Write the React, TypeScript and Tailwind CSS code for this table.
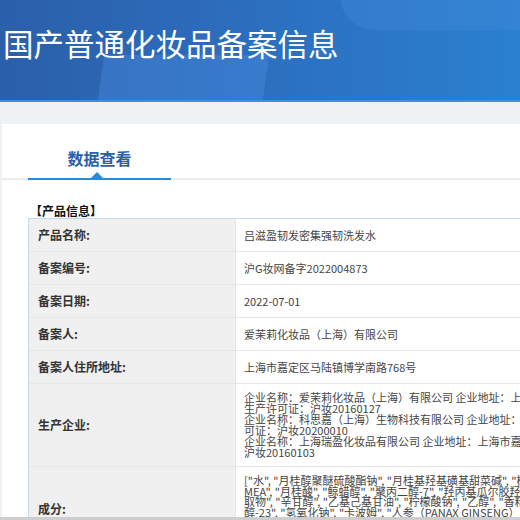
import React from 'react';

const rows: { label: string; value: string }[] = [
  { label: '产品名称:', value: '吕滋盈韧发密集强韧洗发水' },
  { label: '备案编号:', value: '沪G妆网备字2022004873' },
  { label: '备案日期:', value: '2022-07-01' },
  { label: '备案人:', value: '爱茉莉化妆品（上海）有限公司' },
  { label: '备案人住所地址:', value: '上海市嘉定区马陆镇博学南路768号' },
];

const enterpriseLines = [
  '企业名称：爱茉莉化妆品（上海）有限公司 企业地址：上海市嘉定区马陆镇博学南路768号',
  '生产许可证：沪妆20160127',
  '企业名称：科思嘉（上海）生物科技有限公司 企业地址：上海市奉贤区青村镇 生产许',
  '可证：沪妆20200010',
  '企业名称：上海瑞盈化妆品有限公司 企业地址：上海市嘉定区 生产许可证：',
  '沪妆20160103',
];

const ingredientLines = [
  '["水", "月桂醇聚醚硫酸酯钠", "月桂基羟基磺基甜菜碱", "椰油酰胺',
  'MEA", "月桂酸", "鲸蜡醇", "聚丙二醇-7", "羟丙基瓜尔胶羟丙基三甲基',
  '取物", "辛甘醇", "乙基己基甘油", "柠檬酸钠", "乙醇", "香精", "聚季铵',
  '醇-23", "氢氧化钠", "卡波姆", "人参（PANAX GINSENG）根提取物"',
];

const Row = ({ label, children, h }: { label: string; children: React.ReactNode; h: string }) => (
  <div className={`flex border-b border-[#e6e6e6] ${h}`}>
    <div className="w-[206px] shrink-0 bg-[#f0f0f0] flex items-center pl-[9px] text-[12px] font-bold text-[#333]">
      {label}
    </div>
    <div className="flex-1 flex items-center pl-[8px] border-l border-[#e6e6e6] text-[11px] text-[#444]">
      {children}
    </div>
  </div>
);

export default function App() {
  return (
    <div
      className="relative w-[520px] h-[520px] overflow-hidden bg-[#eff2f5]"
      style={{ fontFamily: '"Noto Sans CJK SC", "Noto Sans", sans-serif' }}
    >
      <div className="relative h-[102px] overflow-hidden border-b-2 border-[#3d8fe0] bg-gradient-to-r from-[#2b5fa9] via-[#2c6fbf] to-[#2a80cf]">
        <div className="absolute left-[100px] top-[55px] w-[165px] h-[60px] bg-[#4a8ce0] opacity-40 skew-x-[-8deg]" />
        <div className="absolute right-[-40px] top-[-40px] w-[220px] h-[70px] rounded-full bg-[#4a8ee0] opacity-30" />
        <div className="relative pl-[3px] pt-[28px] text-[30.5px] leading-none text-white">国产普通化妆品备案信息</div>
      </div>
      <div className="h-[22px]" />
      <div className="ml-[2px] h-full bg-white pt-[26px]">
        <div className="flex pl-[26px] border-b-2 border-[#ebebeb]">
          <div className="relative w-[143px] h-[30px] -mb-[2px] border-b-2 border-[#2a8ad8] text-center text-[16px] font-bold leading-none text-[#2b5ea9]">
            数据查看
            <div className="absolute left-[63px] bottom-0 w-0 h-0 border-x-[6px] border-x-transparent border-b-[6px] border-b-[#2a8ad8]" />
          </div>
        </div>
        <div className="mt-[24px] pl-[28px] text-[12px] leading-[14px] font-bold text-[#111]">【产品信息】</div>
        <div className="ml-[26px] w-[720px] border-t border-l border-[#c6daef]">
          {rows.map((r) => (
            <Row key={r.label} label={r.label} h="h-[33px]">
              {r.value}
            </Row>
          ))}
          <Row label="生产企业:" h="h-[83px]">
            <div className="leading-[11px]">
              {enterpriseLines.map((l, i) => (
                <div key={i} className="whitespace-nowrap">{l}</div>
              ))}
            </div>
          </Row>
          <Row label="成分:" h="h-[84px]">
            <div className="leading-[10.5px] self-start pt-[8px]">
              {ingredientLines.map((l, i) => (
                <div key={i} className="whitespace-nowrap">{l}</div>
              ))}
            </div>
          </Row>
        </div>
      </div>
      <div className="absolute left-0 bottom-0 w-full h-[3px] bg-[#cdcdcd]" />
    </div>
  );
}
